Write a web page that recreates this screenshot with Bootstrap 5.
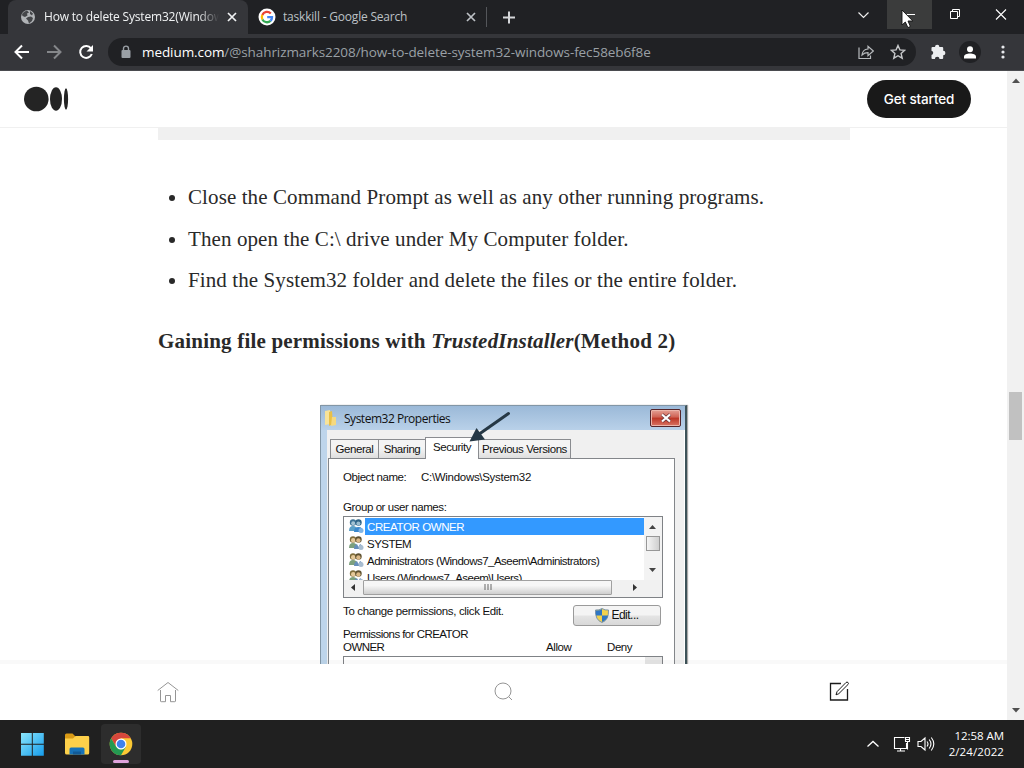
<!DOCTYPE html>
<html lang="en">
<head>
  <meta charset="UTF-8" />
  <meta name="viewport" content="width=device-width, initial-scale=1" />
  <title>How to delete System32(Windows)</title>
  <link href="https://cdn.jsdelivr.net/npm/bootstrap@5.3.3/dist/css/bootstrap.min.css" rel="stylesheet" />
  <style>
    body { width: 1024px; height: 768px; font-family: "Open Sans", "Noto Sans", sans-serif; color: #292929; }
    svg { display: block; flex: none; }
    .line { white-space: nowrap; display: block; }

    /* browser window */
    .tabstrip { height: 34px; background: #202124; padding-left: 8px; font-size: 12px; }
    .tab { height: 34px; }
    .tab-active { width: 240px; background: #35363a; border-radius: 8px 8px 0 0; color: #f1f3f4; padding: 0 11px 0 12px; }
    .tab-title { width: 175px; margin-left: 8px; overflow: hidden; letter-spacing: -.18px; }
    .tab-active .tab-title { -webkit-mask-image: linear-gradient(90deg, #000 88%, transparent); mask-image: linear-gradient(90deg, #000 88%, transparent); }
    .tab-idle { width: 238px; color: #bdc1c6; padding: 0 10px 0 10px; }
    .tab-idle .tab-title { width: 186px; margin-left: 7px; letter-spacing: -.2px; }
    .tab-sep { width: 1px; height: 20px; background: #54565a; }
    .win-btn { width: 46px; height: 29px; }
    .win-hover { width: 45px; background: #3b3c3c; }
    .pointer { position: absolute; left: 14px; top: 9px; }
    .toolbar { height: 37px; background: #35363a; border-bottom: 1px solid #4a4b4f; padding-left: 14px; }
    .omnibox { width: 808px; height: 28px; border-radius: 14px; background: #202124; margin-left: 13px; padding: 0 10px 0 12px; color: #9aa0a6; font-size: 13.5px; }
    .omnibox .url { margin-left: 10px; letter-spacing: -.08px; }
    .omnibox b { font-weight: 400; color: #fff; }
    .avatar { width: 22px; height: 22px; background: #202124; }

    /* page */
    .viewport { height: 649px; }
    .site-head { height: 57px; border-bottom: 1px solid #f0f0f0; padding: 0 36px 0 24px; }
    .btn-start { width: 104px; height: 38px; background: #191919; color: #fff; font: 500 13.5px Inter, sans-serif; letter-spacing: -.15px; padding: 0; }
    .article { height: 536px; padding-left: 158px; overflow: hidden; font-family: "Liberation Serif", serif; }
    .codeblock { width: 692px; height: 12px; background: #f0f0f0; }
    .steps { margin: 41px 0 0; padding: 0; font-size: 21px; letter-spacing: .1px; }
    .steps .step { height: 41.5px; line-height: 32px; }
    .bullet { width: 6px; height: 6px; border-radius: 50%; background: #292929; margin: 14px 13px 0 11px; }
    .method { margin: 19px 0 0; height: 32px; font-size: 21px; line-height: 32px; font-weight: 700; letter-spacing: .2px; }
    .site-foot { height: 56px; padding: 0 157px; box-shadow: 0 -4px 0 rgba(0, 0, 0, .025); z-index: 1; }
    .scrollbar { width: 17px; background: #f1f1f1; padding: 7px 0; }
    .scroll-thumb { width: 13px; height: 48px; background: #c1c1c1; margin-top: 309px; }

    /* properties dialog */
    .dialog { width: 367px; height: 330px; margin: 48px 0 0 162px; padding: 0 9px 0 7px; font: 11.5px "Liberation Sans", sans-serif; letter-spacing: -.42px; color: #111; background: #f0f0f0; border: solid #8296a6; border-width: 1px 2px 0 1px; border-right-color: #3e5359; box-shadow: inset 6px 0 #bed5eb, inset -1px 0 #fff, 1px 0 1px #aaa; }
    .dlg-title { height: 24px; margin: 0 -9px 0 -7px; padding: 1px 4px 0 2px; background: linear-gradient(#9bb9d8, #b9d1e9); font: 12px "Open Sans", sans-serif; }
    .dlg-title span { margin-left: 5px; letter-spacing: -.48px; }
    .dlg-close { width: 31px; height: 18px; border: 1px solid #54252a; border-radius: 2px; background: linear-gradient(#e5a195, #cf6152 45%, #bc3524 50%, #d97464); box-shadow: inset 0 0 0 1px #ecb5aa; }
    .dlg-tabs { height: 28px; padding: 0 0 0 2px; }
    .dlg-tab { height: 19px; line-height: 19px; border: 1px solid #8a8c90; border-bottom: 0; background: linear-gradient(#f4f4f4 45%, #dedede); text-align: center; white-space: nowrap; }
    .dlg-tab-on { height: 22px; background: #fff; margin: 0 -1px -1px; z-index: 1; line-height: 19px; }
    .arrow { left: 136px; top: -26px; z-index: 2; }
    .pane { width: 347px; height: 300px; background: #fff; border: 1px solid #83868a; padding: 11px 11px 0 14px; }
    .object-row { height: 31px; line-height: 14px; }
    .object-row span:last-child { letter-spacing: -.3px; }
    .users { width: 320px; height: 82px; border: 1px solid #7f8286; margin-top: 3px; }
    .user-rows { height: 63px; padding: 1px 0 0 4px; overflow: hidden; }
    .user { height: 17.2px; line-height: 18px; }
    .user span { padding-left: 2px; margin-left: 1px; height: 17px; letter-spacing: -.52px; }
    .user-on span { background: #39f; color: #fff; letter-spacing: -.4px; }
    .vbar { width: 18px; height: 63px; background: #f3f3f3; padding: 8px 1px 8px 0; }
    .vbar .grip { width: 14px; height: 15px; border: 1px solid #979797; background: linear-gradient(90deg, #f5f5f5, #cfcfcf); margin-top: 7px; }
    .hbar { height: 17px; background: #f1f1f1; padding: 0 25px 2px 7px; }
    .hbar .grip { width: 249px; height: 15px; border: 1px solid #a0a0a0; border-radius: 1px; background: linear-gradient(#f6f6f6 35%, #cfcfcf); margin-left: 8px; }
    .btn-edit { width: 88px; height: 21px; margin: 7px 2px 0 0; border: 1px solid #9a9a9a; border-radius: 3px; background: linear-gradient(#f4f4f4 48%, #e4e4e4 52%, #d8d8d8); color: #111; font-size: 12px; letter-spacing: -.5px; line-height: 20px; }
    .perm-row { height: 29px; line-height: 13px; padding-top: 1px; }
    .perm-box { width: 320px; height: 40px; border: 1px solid #7f8286; }
    .perm-box div { width: 17px; height: 38px; background: #e6e6e6; }

    /* taskbar */
    .taskbar { height: 48px; background: #202020; color: #fff; padding: 0 20px 0 20px; font-size: 11.5px; }
    .task-active { width: 40px; height: 40px; background: #2d2d2d; border-radius: 4px; margin-left: 11px; padding-top: 8px; }
    .task-line { width: 16px; height: 3px; border-radius: 2px; background: #dfa3dc; margin-top: 4px; }
    .clock { line-height: 16px; margin-left: 12px; width: 57px; }
    .clock .date { letter-spacing: .1px; }
    .clock .time { letter-spacing: -.05px; }
  </style>
</head>
<body class="overflow-hidden bg-white">
  <svg width="0" height="0" class="position-absolute">
    <defs>
      <symbol id="users" viewBox="0 0 16 16">
        <circle cx="5" cy="4.5" r="3.2" fill="#806e3b"/><circle cx="5.2" cy="5.3" r="2.2" fill="#e5c99a"/>
        <path d="M1 13q0-5 4-5t5 5z" fill="#7da07d"/>
        <circle cx="10.5" cy="4.5" r="3.2" fill="#5e5130"/><circle cx="10.4" cy="5.5" r="2.2" fill="#dcb987"/>
        <path d="M6 14q0-5 4.500-5t4.500 5z" fill="#668fbb"/><path d="M9 9l1.500 3 1.500-3z" fill="#fff"/>
        <circle cx="13" cy="12.500" r="2.500" fill="#a8bdd1"/>
      </symbol>
      <symbol id="users-on" viewBox="0 0 16 16">
        <circle cx="5" cy="4.5" r="3.2" fill="#3d7396"/><circle cx="5.2" cy="5.3" r="2" fill="#a5c4d4"/>
        <path d="M1 13q0-5 4-5t5 5z" fill="#5aa0c8"/>
        <circle cx="10.5" cy="4.5" r="3.2" fill="#2e6385"/><circle cx="10.4" cy="5.5" r="2" fill="#9abdd0"/>
        <path d="M6 14q0-5 4.500-5t4.500 5z" fill="#3a88cd"/><circle cx="13" cy="12.500" r="2.500" fill="#7fb5e6"/>
      </symbol>
      <symbol id="cross" viewBox="0 0 10 10"><path d="M1 1l8 8M9 1L1 9" stroke="currentColor" stroke-width="1.700"/></symbol>
    </defs>
  </svg>

  <div class="tabstrip d-flex">
    <div class="tab tab-active d-flex align-items-center">
      <svg width="16" height="16" viewBox="0 0 16 16"><circle cx="8" cy="8" r="7" fill="#b0b3b6"/><path d="M2 5q2-3 5-3.500l2 2-2 1 .5 2L5 8 2.500 7zM8 8l3-.5 2 1.500-1 3-3 2.500-1-3-2-2zM10 2l3 2.500-1 2-2-1.500z" fill="#45474a"/></svg>
      <span class="tab-title line">How to delete System32(Windows)</span>
      <svg class="ms-auto" width="10" height="10"><use href="#cross"/></svg>
    </div>
    <div class="tab tab-idle d-flex align-items-center">
      <svg width="18" height="18" viewBox="0 0 18 18"><circle cx="9" cy="9" r="8.500" fill="#fff"/><g fill="none" stroke-width="2.300"><path d="M12.800 5.500A5.200 5.200 0 0 0 4.300 6.900" stroke="#ea4335"/><path d="M4.300 6.900A5.200 5.200 0 0 0 4.400 11.400" stroke="#fbbc05"/><path d="M4.400 11.400A5.200 5.200 0 0 0 12.500 12.900" stroke="#34a853"/><path d="M12.500 12.900A5.200 5.200 0 0 0 14 9.200H9.200" stroke="#4285f4"/></g></svg>
      <span class="tab-title line">taskkill - Google Search</span>
      <svg class="ms-auto" width="10" height="10"><use href="#cross"/></svg>
    </div>
    <div class="d-flex align-items-center">
      <div class="tab-sep"></div>
      <svg class="ms-3" width="13" height="13" viewBox="0 0 13 13"><path d="M6 .5v12M0 6.500h12" stroke="#d5d7da" stroke-width="2"/></svg>
    </div>
    <div class="d-flex ms-auto">
      <div class="win-btn d-flex align-items-center justify-content-center"><svg width="12" height="8" viewBox="0 0 12 8"><path d="M.5 1.500l5 5 5-5" fill="none" stroke="#eee" stroke-width="1.200"/></svg></div>
      <div class="win-btn win-hover position-relative d-flex align-items-center justify-content-center">
        <svg width="10" height="2"><path d="M0 .5h10" stroke="#fff"/></svg>
        <svg class="pointer" width="14" height="20" viewBox="0 0 14 20"><path d="M1 1v15l3.300-3 2.600 5.600 2.500-1.100L7 12h4.800z" fill="#fff" stroke="#111" stroke-width=".9"/></svg>
      </div>
      <div class="win-btn d-flex align-items-center justify-content-center"><svg width="11" height="11" viewBox="0 0 11 11"><path d="M.5 2.500h7v7h-7zM2.500 2.500v-2h7v7h-2" fill="none" stroke="#fff"/></svg></div>
      <div class="win-btn d-flex align-items-center justify-content-center"><svg width="12" height="12" viewBox="0 0 12 12"><path d="M1 0.500l10 10M11 .5L1 10.500" stroke="#fff" stroke-width="1.100"/></svg></div>
    </div>
  </div>

  <div class="toolbar d-flex align-items-center">
    <svg width="16" height="16" viewBox="0 0 16 16"><path d="M15 8H2M8 1.500L1.500 8 8 14.500" fill="none" stroke="#fff" stroke-width="2"/></svg>
    <svg class="ms-3" width="16" height="16" viewBox="0 0 16 16"><path d="M1 8h13M8 1.500L14.500 8 8 14.500" fill="none" stroke="#85878a" stroke-width="2"/></svg>
    <svg class="ms-3" width="17" height="16" viewBox="0 0 17 16"><path d="M13 4.300A6 6 0 1 0 13.800 10" fill="none" stroke="#fff" stroke-width="2"/><path d="M15 1v6.500H8.500z" fill="#fff"/></svg>
    <div class="omnibox d-flex align-items-center">
      <svg width="12" height="14" viewBox="0 0 12 14"><rect x="1.500" y="5" width="9" height="8" rx="1" fill="#9aa0a6"/><path d="M3.500 5.500V3.600a2.500 2.500 0 0 1 5 0v1.900" fill="none" stroke="#9aa0a6" stroke-width="1.400"/></svg>
      <span class="url line"><b>medium.com</b>/@shahrizmarks2208/how-to-delete-system32-windows-fec58eb6f8e</span>
      <svg class="ms-auto" width="16" height="16" viewBox="0 0 16 16"><path d="M1 3.500v11h11.500v-3" fill="none" stroke="#b7babd" stroke-width="1.200"/><path d="M4 11q.5-5.500 6-6V2.300L15.300 7 10 11.600V8.700q-3.500 0-6 2.300z" fill="none" stroke="#b7babd" stroke-width="1.200"/></svg>
      <svg class="ms-3" width="16" height="16" viewBox="0 0 16 16"><path d="M8 1.500l1.900 4.400 4.800.4-3.600 3.200 1.100 4.700L8 11.700l-4.200 2.500 1.100-4.700L1.300 6.300l4.800-.4z" fill="none" stroke="#c6c8ca" stroke-width="1.400"/></svg>
    </div>
    <svg width="16" height="16" viewBox="0 0 16 16" style="margin-left:14px"><path d="M1.500 4q0-1 1-1H5a2.200 2.200 0 1 1 4.400 0h2.800q1 0 1 1v2.800a2.200 2.200 0 1 1 0 4.400V14q0 1-1 1H9.500a2.300 2.300 0 0 0-4.600 0H2.500q-1 0-1-1v-3a2.200 2.200 0 0 0 0-4.300z" fill="#eceef0"/></svg>
    <div class="avatar rounded-circle d-flex align-items-center justify-content-center" style="margin-left:13px"><svg width="12" height="13" viewBox="0 0 12 13"><circle cx="6" cy="3.200" r="3" fill="#fff"/><path d="M0 12.500v-1.800C0 8.500 3 7.500 6 7.500s6 1 6 3.200v1.800z" fill="#fff"/></svg></div>
    <svg width="4" height="14" viewBox="0 0 4 14" fill="#e8eaed" style="margin-left:20px"><circle cx="2" cy="2" r="1.600"/><circle cx="2" cy="7" r="1.600"/><circle cx="2" cy="12" r="1.600"/></svg>
  </div>

  <div class="viewport d-flex">
    <div class="flex-grow-1 d-flex flex-column">
      <header class="site-head d-flex align-items-center justify-content-between">
        <svg width="45" height="26" viewBox="0 0 45 26" fill="#242424"><circle cx="12.300" cy="13" r="12.300"/><ellipse cx="32" cy="13" rx="6" ry="11.800"/><ellipse cx="42" cy="13" rx="2.100" ry="10.700"/></svg>
        <button class="btn btn-start rounded-pill">Get started</button>
      </header>
      <main class="article">
        <div class="codeblock"></div>
        <ul class="steps list-unstyled">
          <li class="step d-flex"><i class="bullet"></i><span class="line">Close the Command Prompt as well as any other running programs.</span></li>
          <li class="step d-flex"><i class="bullet"></i><span class="line">Then open the C:\ drive under My Computer folder.</span></li>
          <li class="step d-flex"><i class="bullet"></i><span class="line">Find the System32 folder and delete the files or the entire folder.</span></li>
        </ul>
        <h2 class="method line">Gaining file permissions with <em>TrustedInstaller</em>(Method 2)</h2>

        <div class="dialog">
          <div class="dlg-title d-flex align-items-center">
            <svg width="16" height="18" viewBox="0 0 16 18"><path d="M2 2l5-1v14l-5 1z" fill="#f7e39a"/><path d="M6 3l3-1 1 13-4 2z" fill="#e9c048"/><path d="M9 8h4v8l-5 1z" fill="#f5d980"/></svg>
            <span>System32 Properties</span>
            <div class="dlg-close ms-auto d-flex align-items-center justify-content-center"><svg width="12" height="10" viewBox="0 0 12 10"><path d="M2 1.500l8 7M10 1.500l-8 7" stroke="#65343a" stroke-width="3.600"/><path d="M2 1.500l8 7M10 1.500l-8 7" stroke="#fff" stroke-width="2.200"/></svg></div>
          </div>
          <div class="dlg-tabs d-flex align-items-end position-relative">
            <div class="dlg-tab" style="width:49px">General</div>
            <div class="dlg-tab border-start-0" style="width:47px">Sharing</div>
            <div class="dlg-tab dlg-tab-on" style="width:54px">Security</div>
            <div class="dlg-tab" style="width:93px">Previous Versions</div>
            <svg class="arrow position-absolute" width="50" height="42" viewBox="0 0 50 42"><path d="M44.500 9.500L16 29.500" stroke="#263845" stroke-width="3" stroke-linecap="round"/><path d="M5.500 37.500l7-13.500 8.500 11.500z" fill="#263845"/></svg>
          </div>
          <div class="pane">
            <div class="object-row d-flex"><span style="width:78px">Object name:</span><span>C:\Windows\System32</span></div>
            <div style="height:12px;line-height:13px">Group or user names:</div>
            <div class="users">
              <div class="d-flex">
                <div class="user-rows flex-grow-1">
                  <div class="user user-on d-flex"><svg width="16" height="16"><use href="#users-on"/></svg><span class="flex-grow-1">CREATOR OWNER</span></div>
                  <div class="user d-flex"><svg width="16" height="16"><use href="#users"/></svg><span>SYSTEM</span></div>
                  <div class="user d-flex"><svg width="16" height="16"><use href="#users"/></svg><span>Administrators (Windows7_Aseem\Administrators)</span></div>
                  <div class="user d-flex"><svg width="16" height="16"><use href="#users"/></svg><span>Users (Windows7_Aseem\Users)</span></div>
                </div>
                <div class="vbar d-flex flex-column align-items-center">
                  <svg width="7" height="4"><path d="M0 4l3.500-4L7 4z" fill="#444"/></svg>
                  <div class="grip"></div>
                  <svg class="mt-auto" width="7" height="4"><path d="M0 0l3.500 4L7 0z" fill="#444"/></svg>
                </div>
              </div>
              <div class="hbar d-flex align-items-center">
                <svg width="4" height="7"><path d="M4 0L0 3.500 4 7z" fill="#333"/></svg>
                <div class="grip d-flex align-items-center justify-content-center"><svg width="8" height="6"><path d="M1 0v6M4 0v6M7 0v6" stroke="#666"/></svg></div>
                <svg class="ms-auto" width="4" height="7"><path d="M0 0l4 3.500L0 7z" fill="#333"/></svg>
              </div>
            </div>
            <div class="d-flex justify-content-between" style="height:29px">
              <span style="padding-top:7px;letter-spacing:-.35px">To change permissions, click Edit.</span>
              <button class="btn btn-edit p-0 d-flex align-items-center justify-content-center"><svg width="14" height="15" viewBox="0 0 14 15" style="margin-right:2px"><path d="M7 .5q3 2 6.500 1.500Q14 12 7 14.500 0 12 .5 2 4 2.500 7 .5z" fill="#f1d24e" stroke="#7b93a8"/><path d="M7 1v6.500H1Q.5 5 1 2.500 4 3 7 1zM7 7.500h6Q12 12 7 14z" fill="#2f76c4"/></svg>Edit...</button>
            </div>
            <div class="perm-row d-flex"><span style="width:203px;letter-spacing:-.55px">Permissions for CREATOR<br>OWNER</span><span class="pt-3" style="width:61px;margin-top:-3px">Allow</span><span class="pt-3" style="margin-top:-3px">Deny</span></div>
            <div class="perm-box d-flex justify-content-end"><div></div></div>
          </div>
        </div>
      </main>
      <footer class="site-foot bg-white d-flex align-items-center justify-content-between">
        <svg width="22" height="22" viewBox="0 0 22 22" fill="none" stroke="#959595"><path d="M.7 9.500L11 1.500l10.300 8M3.500 9v11q0 .7.700.7h4.300V14.500h5v6.200h4.300q.7 0 .7-.7V9"/></svg>
        <svg width="20" height="20" viewBox="0 0 20 20" fill="none" stroke="#959595"><circle cx="9" cy="9" r="8"/><path d="M14.700 14.700l3.300 3.300"/></svg>
        <svg width="22" height="22" viewBox="0 0 22 22" fill="none" stroke="#1b1b1b"><path d="M13 2.500H2.500v16.500h17V8" stroke-width="1.300"/><path d="M8 13.800l1-3.100L18 1.500q1-.9 2 0t0 2l-9.200 9.200z"/></svg>
      </footer>
    </div>
    <div class="scrollbar d-flex flex-column align-items-center">
      <svg width="8" height="5"><path d="M0 5l4-4.500L8 5z" fill="#505050"/></svg>
      <div class="scroll-thumb"></div>
      <svg class="mt-auto" width="8" height="5"><path d="M0 0l4 4.500L8 0z" fill="#505050"/></svg>
    </div>
  </div>

  <div class="taskbar d-flex align-items-center">
    <svg width="24" height="24" viewBox="0 0 24 24"><defs><linearGradient id="win" x2="1" y2="1"><stop stop-color="#8be6fb"/><stop offset="1" stop-color="#159cec"/></linearGradient></defs><path d="M1 1h10.800v10.800H1zM12.800 1h11v10.800h-11zM1 12.800h10.800v11H1zM12.800 12.800h11v11h-11z" fill="url(#win)"/></svg>
    <svg width="26" height="24" viewBox="0 0 26 24" style="margin-left:20px"><path d="M1 3q0-1.500 1.500-1.500h6L11 4v4H1z" fill="#d99a15"/><path d="M1 6.500h8L11.500 4H24q1.200 0 1.200 1.200V21q0 1.500-1.500 1.500h-21Q1 22.500 1 21z" fill="#fdd04a"/><path d="M5.500 22.500V17q0-1.500 1.500-1.500h12q1.500 0 1.500 1.500v5.500z" fill="#1772b8"/><path d="M9 22.500v-3h8v3z" fill="#125a96"/></svg>
    <div class="task-active d-flex flex-column align-items-center">
      <svg width="24" height="24" viewBox="0 0 24 24"><circle cx="12" cy="12" r="11.300" fill="#fcc934"/><path d="M2.200 6.350A11.300 11.300 0 0 1 21.800 6.350H12L7.100 14.800z" fill="#d6473c"/><path d="M2.200 6.350A11.300 11.300 0 0 0 12 23.300L16.900 14.800 12 17.600 7.100 14.800z" fill="#249a52"/><circle cx="12" cy="12" r="5.500" fill="#fff"/><circle cx="12" cy="12" r="4.300" fill="#3f82ec"/></svg>
      <div class="task-line"></div>
    </div>
    <div class="d-flex align-items-center ms-auto">
      <svg width="12" height="8" viewBox="0 0 12 8"><path d="M.5 6.500l5.500-5 5.500 5" fill="none" stroke="#fff" stroke-width="1.300"/></svg>
      <svg width="18" height="18" viewBox="0 0 18 18" fill="none" stroke="#fff" stroke-width="1.100" style="margin-left:14px"><path d="M11.500 2.500H1.500v11h12V8M4 16h8M7.500 13.500V16M12.500 2.500h4v4h-4zM14.500 6.500v8M12.500 4.500h4"/></svg>
      <svg width="18" height="16" viewBox="0 0 18 16" fill="none" stroke="#fff" stroke-width="1.100" style="margin-left:6px"><path d="M1 5.500h3L8 2v12l-4-3.500H1zM10 5.500q2 2.500 0 5M12.200 3.500q3.500 4.500 0 9M14.300 1.500q5 6.500 0 13"/></svg>
      <div class="clock text-end"><div class="line time">12:58 AM</div><div class="line date">2/24/2022</div></div>
    </div>
  </div>
  <script src="https://cdn.jsdelivr.net/npm/bootstrap@5.3.3/dist/js/bootstrap.bundle.min.js"></script>
</body>
</html>
